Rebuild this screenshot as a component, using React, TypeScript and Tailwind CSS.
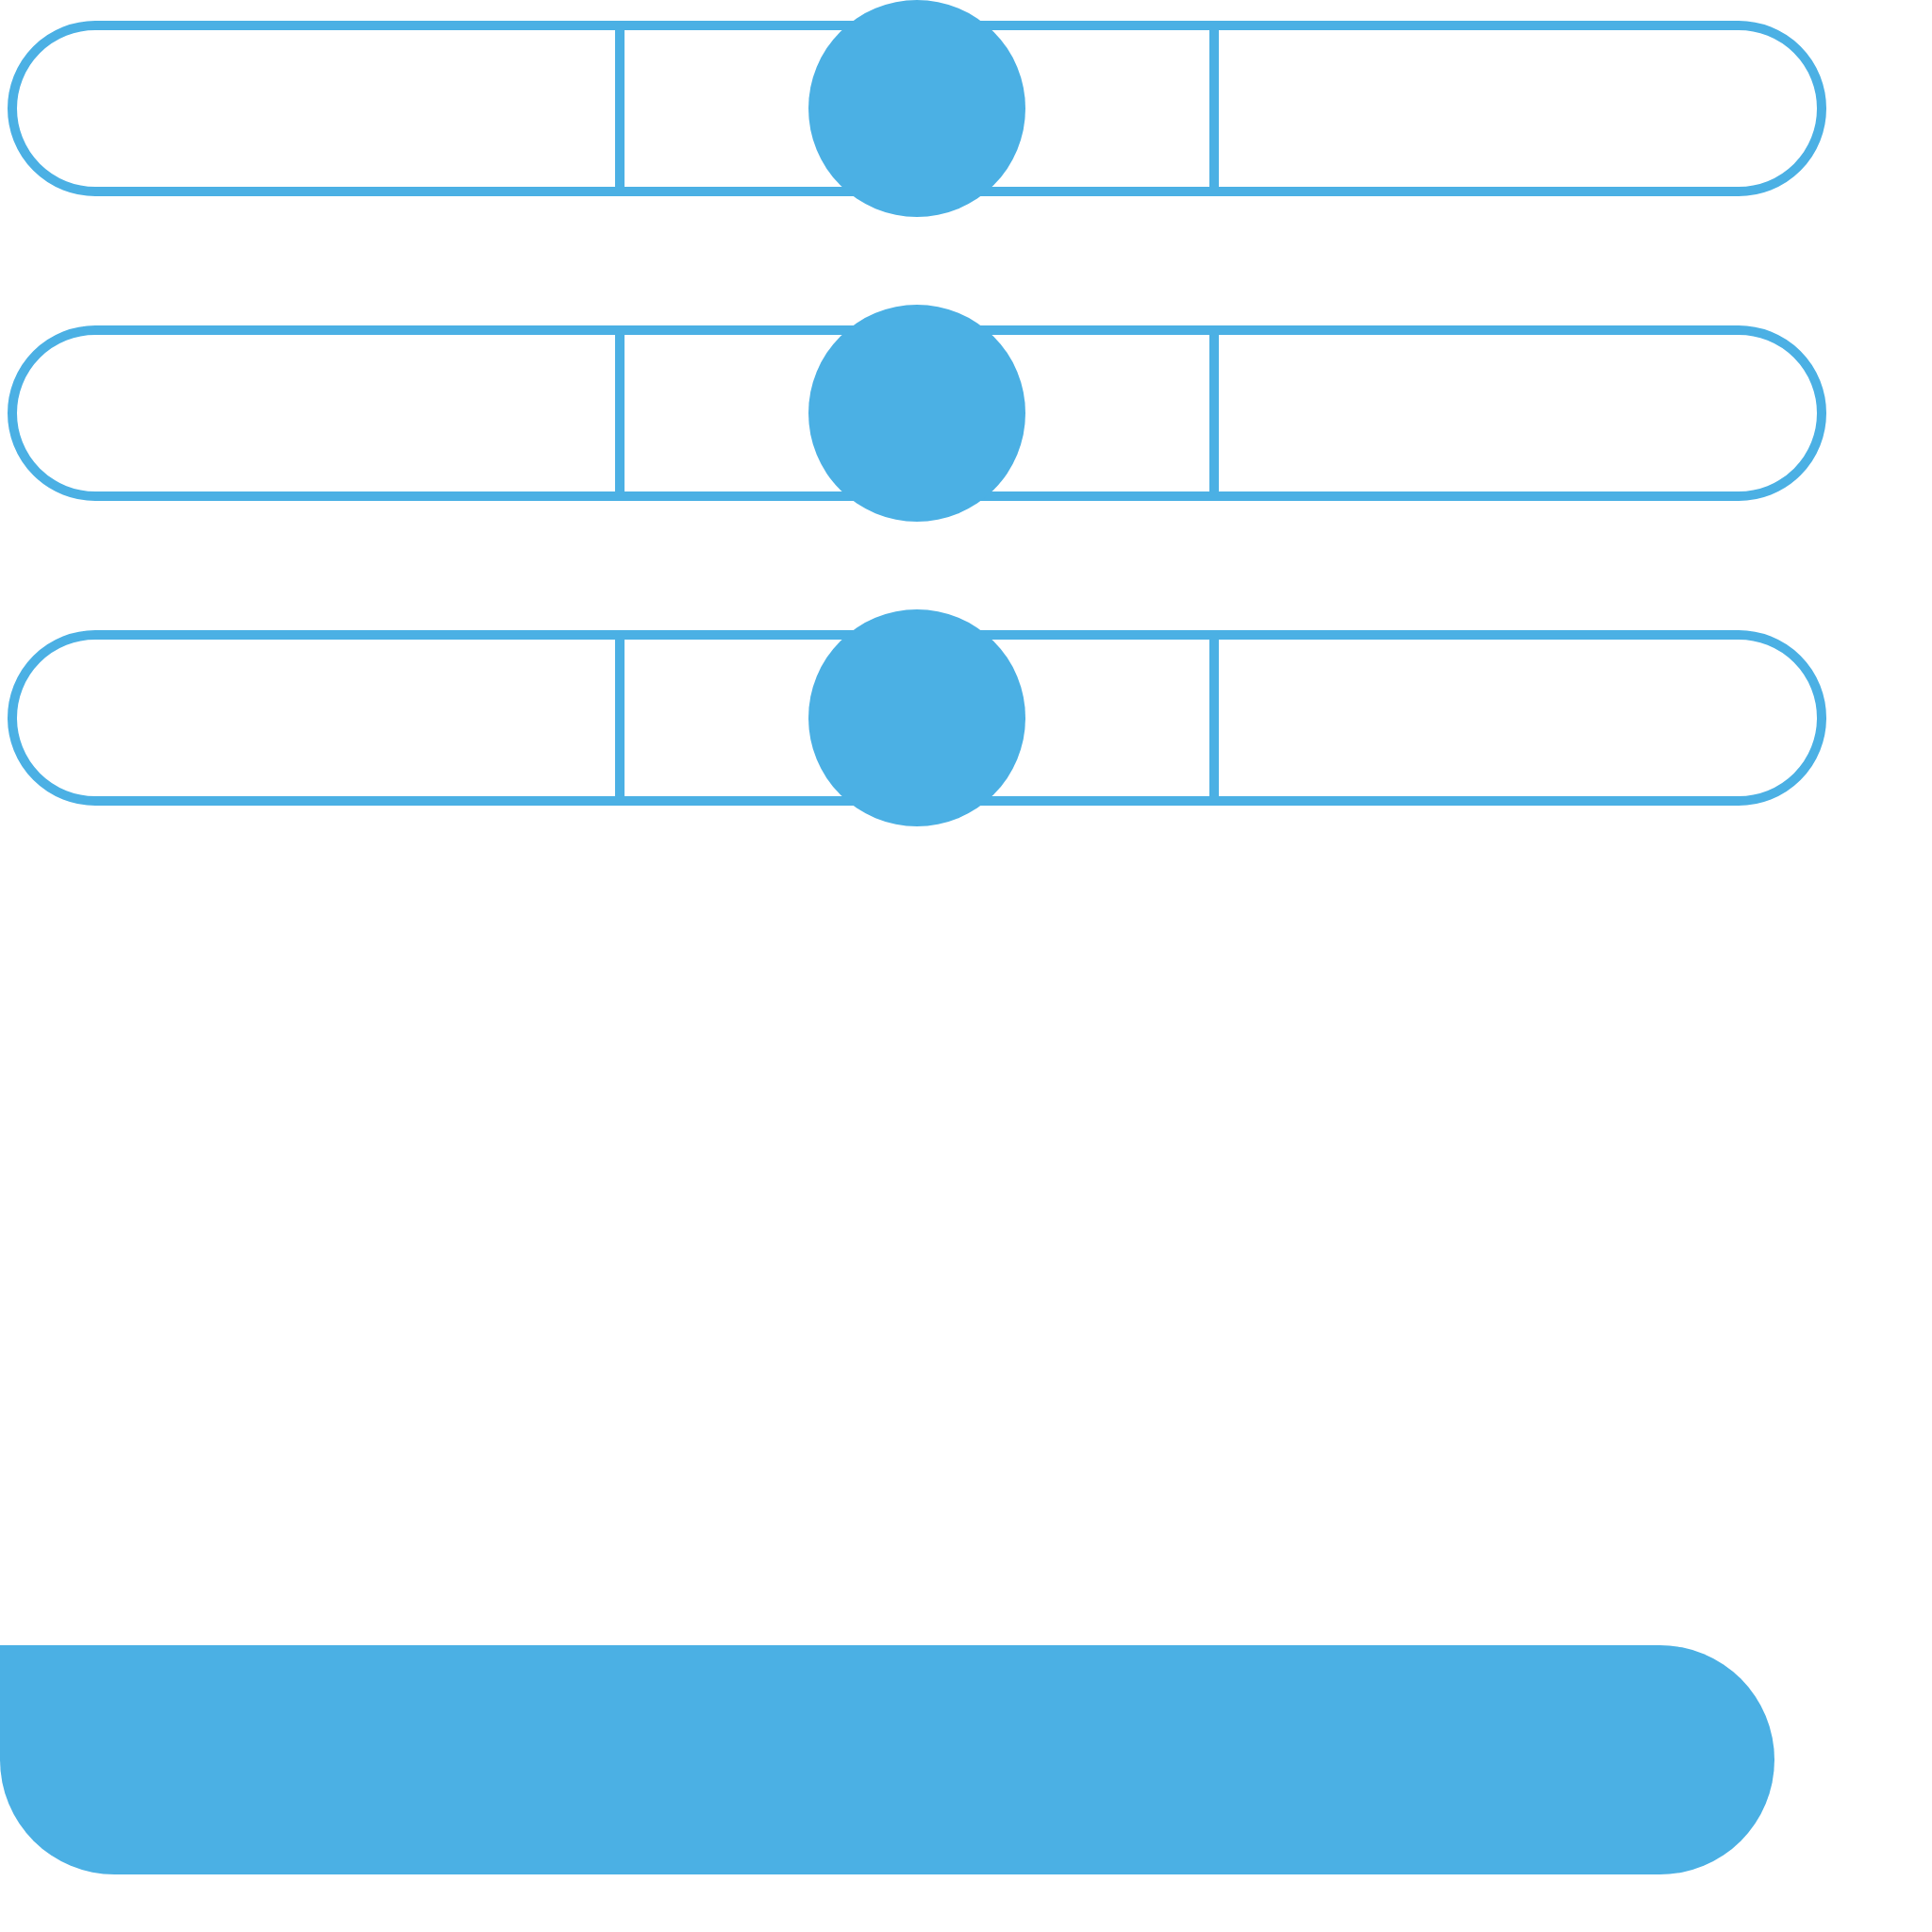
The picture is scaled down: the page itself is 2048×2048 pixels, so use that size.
export default function App() {
  const rows = [0, 1, 2];

  return (
    <div className="w-[2048px] h-[2048px] bg-white flex flex-col">
      <div className="flex flex-col gap-[93px] pl-[8px]">
        {rows.map(i => (
          <div key={i} className="relative w-[1928px] h-[230px] flex items-center">
            <div className="w-full h-[186px] rounded-full border-[10px] border-[#4bb0e4] flex">
              <div className="w-[644px] border-r-[10px] border-[#4bb0e4]" />
              <div className="w-[630px] border-r-[10px] border-[#4bb0e4]" />
              <div className="flex-1" />
            </div>
            <div className="absolute top-0 left-1/2 -translate-x-1/2 w-[230px] h-[230px] rounded-full bg-[#4bb0e4]" />
          </div>
        ))}
      </div>
      <div className="mt-[868px] w-[1881px] h-[243px] bg-[#4bb0e4] rounded-tr-[122px] rounded-br-[122px] rounded-bl-[122px]" />
    </div>
  );
}
